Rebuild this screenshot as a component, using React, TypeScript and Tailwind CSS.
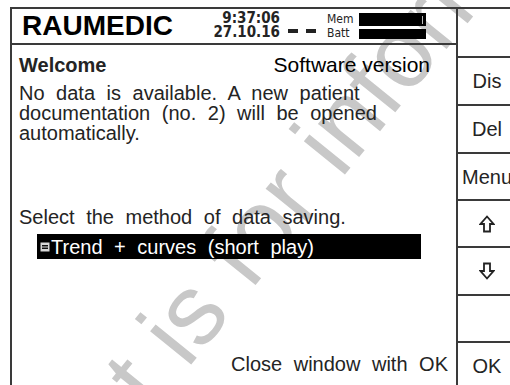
import React from "react";

const condensed = "font-['DejaVu_Sans_Condensed','DejaVu_Sans',sans-serif]";

function ArrowUp() {
  return (
    <svg width="16" height="18" viewBox="0 0 16 18" fill="none">
      <path d="M8 1.5 L14.5 9 H11 V16.5 H5 V9 H1.5 Z" stroke="#222" strokeWidth="1.8" strokeLinejoin="miter" />
    </svg>
  );
}

function ArrowDown() {
  return (
    <svg width="16" height="18" viewBox="0 0 16 18" fill="none">
      <path d="M8 16.5 L14.5 9 H11 V1.5 H5 V9 H1.5 Z" stroke="#222" strokeWidth="1.8" strokeLinejoin="miter" />
    </svg>
  );
}

function SoftKey({ h, children }: { h: string; children?: React.ReactNode }) {
  return (
    <div className={`flex shrink-0 items-center justify-center border-b-2 border-[#3a3a3a] text-[20px] leading-none ${h}`}>
      {children}
    </div>
  );
}

export default function App() {
  return (
    <div className="relative h-[385px] w-[510px] overflow-hidden bg-white font-['Liberation_Sans',Arial,sans-serif] text-[#242424]">
      {/* watermark */}
      <div className="pointer-events-none absolute left-[152px] top-[328px] origin-[0_85px] -rotate-[51deg] whitespace-nowrap text-[100px] leading-none text-[#c8c8c8]">
        t is for information
      </div>

      <div className="relative ml-[10px] mt-[7px] flex w-[506px] border-l-2 border-t-2 border-[#3a3a3a]">
        <main className="flex h-[378px] w-[446px] shrink-0 flex-col border-r-2 border-[#3a3a3a]">
          <header className="flex h-[36px] shrink-0 items-center border-b-2 border-[#3a3a3a]">
            <div className="w-[200px] pl-[10px] text-[28px] font-bold leading-none text-black">RAUMEDIC</div>
            <div className={`mb-[3px] flex w-[68px] flex-col items-end text-[15px] font-bold leading-[14px] ${condensed}`}>
              <span>9:37:06</span>
              <span>27.10.16</span>
            </div>
            <div className="mb-[10px] ml-[8px] flex gap-[8px] self-end">
              <span className="h-[4px] w-[10px] bg-[#222]" />
              <span className="h-[4px] w-[10px] bg-[#222]" />
            </div>
            <div className={`ml-[11px] flex w-[32px] flex-col text-[12px] leading-[14px] ${condensed}`}>
              <span>Mem</span>
              <span>Batt</span>
            </div>
            <div className="flex w-[67px] flex-col gap-[3px]">
              <div className="flex h-[13px] items-center justify-end bg-black pr-[3px]">
                <span className="h-[8px] w-[1px] bg-[#bbb]" />
              </div>
              <div className="h-[10px] bg-black" />
            </div>
          </header>

          <section className="flex flex-col pt-[10px] text-[20px] leading-[20px] [word-spacing:6px]">
            <div className="flex items-center justify-between pl-[7px] pr-[26px]">
              <span className="font-bold [word-spacing:0]">Welcome</span>
              <span className="text-[21px] text-black [word-spacing:0]">Software version</span>
            </div>
            <p className="mt-[8px] pl-[7px]">
              No data is available. A new patient
              <br />
              documentation (no. 2) will be opened
              <br />
              automatically.
            </p>
            <p className="mt-[64px] pl-[7px]">Select the method of data saving.</p>
            <div className="ml-[25px] mt-[7px] flex h-[25px] w-[384px] items-center bg-black pl-[3px] text-white">
              <svg width="10" height="10" viewBox="0 0 10 10" className="shrink-0">
                <rect x="0.5" y="0.5" width="9" height="9" fill="#d8d8d8" />
                <rect x="2" y="3" width="6" height="1.5" fill="#111" />
                <rect x="2" y="5.5" width="6" height="1.5" fill="#111" />
              </svg>
              <span className="ml-[1px]">Trend + curves (short play)</span>
            </div>
            <p className="mt-[95px] pr-[8px] text-right">Close window with OK</p>
          </section>
        </main>

        <aside className="flex w-[58px] shrink-0 flex-col">
          <SoftKey h="h-[49px]" />
          <SoftKey h="h-[48px]">Dis</SoftKey>
          <SoftKey h="h-[48px]">Del</SoftKey>
          <SoftKey h="h-[47px]">Menu</SoftKey>
          <SoftKey h="h-[47px]">
            <ArrowUp />
          </SoftKey>
          <SoftKey h="h-[48px]">
            <ArrowDown />
          </SoftKey>
          <SoftKey h="h-[47px]" />
          <SoftKey h="h-[47px]">OK</SoftKey>
        </aside>
      </div>
    </div>
  );
}
